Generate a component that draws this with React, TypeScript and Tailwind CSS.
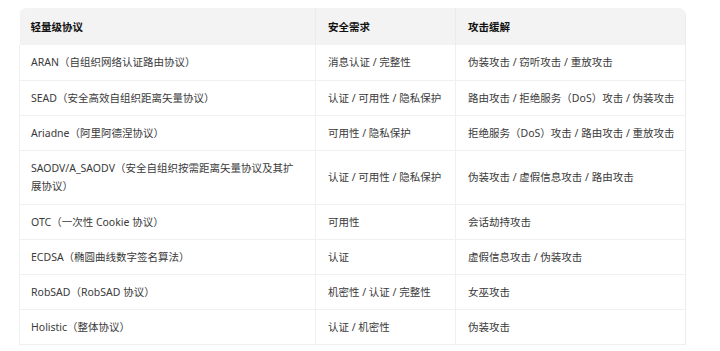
const rows: [React.ReactNode, string, string][] = [
  ["ARAN（自组织网络认证路由协议）", "消息认证 / 完整性", "伪装攻击 / 窃听攻击 / 重放攻击"],
  ["SEAD（安全高效自组织距离矢量协议）", "认证 / 可用性 / 隐私保护", "路由攻击 / 拒绝服务（DoS）攻击 / 伪装攻击"],
  ["Ariadne（阿里阿德涅协议）", "可用性 / 隐私保护", "拒绝服务（DoS）攻击 / 路由攻击 / 重放攻击"],
  [
    <>
      SAODV/A_SAODV（安全自组织按需距离矢量协议及其扩
      <br />
      展协议）
    </>,
    "认证 / 可用性 / 隐私保护",
    "伪装攻击 / 虚假信息攻击 / 路由攻击",
  ],
  ["OTC（一次性 Cookie 协议）", "可用性", "会话劫持攻击"],
  ["ECDSA（椭圆曲线数字签名算法）", "认证", "虚假信息攻击 / 伪装攻击"],
  ["RobSAD（RobSAD 协议）", "机密性 / 认证 / 完整性", "女巫攻击"],
  ["Holistic（整体协议）", "认证 / 机密性", "伪装攻击"],
];

const App = () => {
  return (
    <div
      className="w-[720px] h-[351px] bg-white pl-[19px] pt-[8px]"
      style={{ fontFamily: '"Noto Sans", "Noto Sans CJK SC", sans-serif' }}
    >
      <div className="w-[667px] rounded-t-[8px] overflow-hidden border-r border-[#ececec]">
        <table className="w-full table-fixed border-collapse text-[10.5px] leading-[18px] text-[#3a3a3a] whitespace-nowrap">
          <colgroup>
            <col className="w-[296px]" />
            <col className="w-[140px]" />
            <col className="w-[231px]" />
          </colgroup>
          <thead>
            <tr className="bg-[#f3f3f3] h-[37px]">
              <th className="text-left font-bold text-[#111] px-[11px] border-r border-[#ebebeb]">轻量级协议</th>
              <th className="text-left font-bold text-[#111] px-[12px] border-r border-[#ebebeb]">安全需求</th>
              <th className="text-left font-bold text-[#111] px-[12px]">攻击缓解</th>
            </tr>
          </thead>
          <tbody>
            {rows.map((r, i) => (
              <tr key={i} className={`border-b border-[#f0f0f0] ${i === 3 ? "h-[54px]" : "h-[35px]"}`}>
                <td className="px-[11px] border-r border-[#f0f0f0] border-l">{r[0]}</td>
                <td className="px-[12px] border-r border-[#f0f0f0]">{r[1]}</td>
                <td className="px-[12px]">{r[2]}</td>
              </tr>
            ))}
          </tbody>
        </table>
      </div>
    </div>
  );
};

export default App;
